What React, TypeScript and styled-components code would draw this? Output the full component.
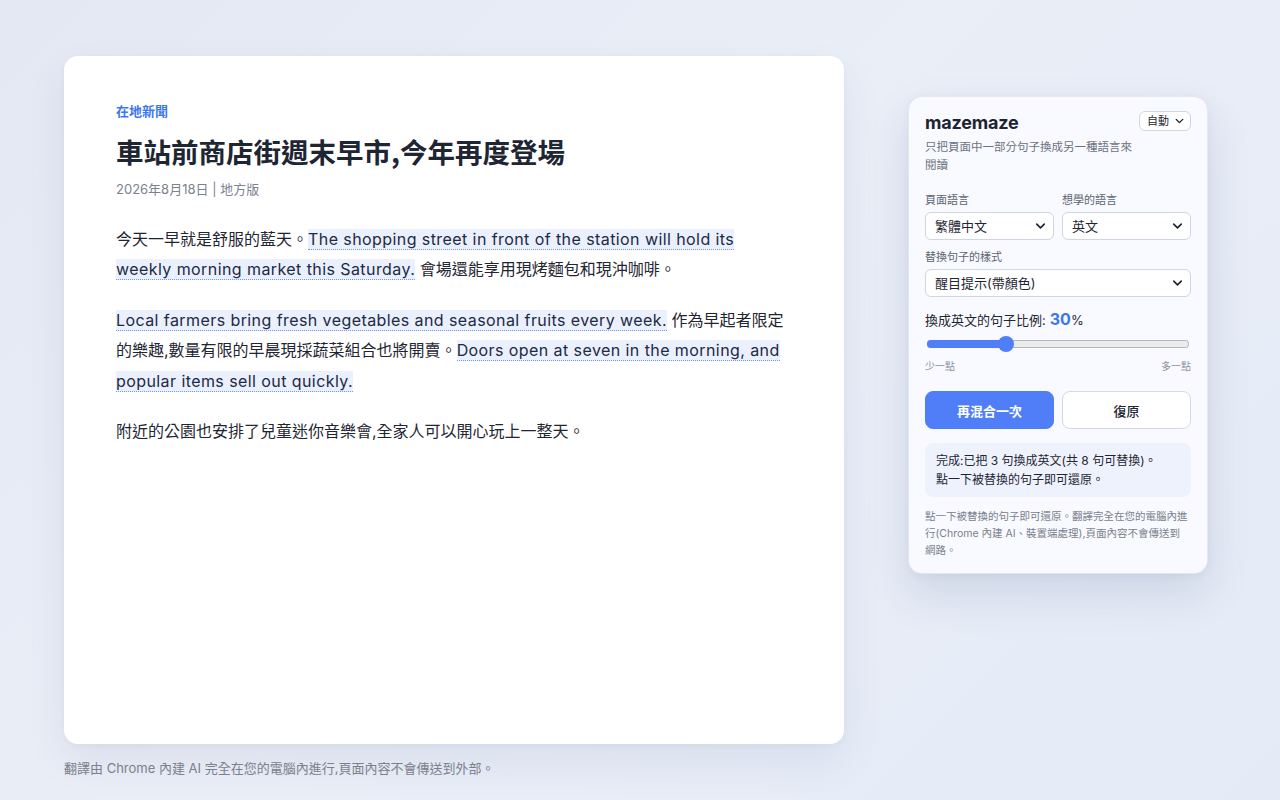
import React from 'react';
import styled, { createGlobalStyle } from 'styled-components';
import { ChevronDown } from 'lucide-react';

const GlobalStyle = createGlobalStyle`
  html, body {
    margin: 0;
    padding: 0;
  }
  body {
    min-height: 800px;
    background: linear-gradient(135deg, #e3e8f3 0%, #eaeef7 45%, #e4ebf7 100%);
    font-family: Inter, "Noto Sans CJK TC", sans-serif;
    color: #1f2633;
  }
`;

const Page = styled.div`
  display: flex;
  align-items: flex-start;
  gap: 64px;
  padding: 56px 0 0 64px;
`;

const Column = styled.div`
  display: flex;
  flex-direction: column;
  width: 780px;
`;

const ArticleCard = styled.article`
  box-sizing: border-box;
  width: 780px;
  min-height: 688px;
  background: #ffffff;
  border-radius: 14px;
  padding: 45px 52px 40px;
  box-shadow: 0 18px 40px rgba(40, 60, 110, 0.08), 0 2px 6px rgba(40, 60, 110, 0.04);
`;

const Category = styled.div`
  font-family: "Noto Sans CJK TC", sans-serif;
  font-size: 13px;
  line-height: 20px;
  font-weight: 700;
  color: #3b78f0;
`;

const Title = styled.h1`
  margin: 12px 0 0;
  font-family: "Noto Sans CJK TC", sans-serif;
  font-size: 27.5px;
  line-height: 36px;
  font-weight: 700;
  color: #1e2533;
`;

const Meta = styled.div`
  margin-top: 10px;
  font-size: 13px;
  line-height: 20px;
  color: #7b8290;
`;

const Body = styled.div`
  margin-top: 25px;
  max-width: 670px;
`;

const Para = styled.p`
  margin: 0 0 20px;
  font-size: 16px;
  line-height: 1.9;
  color: #1f2633;
`;

/* sentences swapped into the target language */
const Swapped = styled.span`
  background: #eaf0fd;
  border-bottom: 1px dotted #6f98ee;
  color: #1c2a44;
  letter-spacing: 0.42px;
`;

const Footnote = styled.div`
  margin-top: 14px;
  font-size: 13px;
  line-height: 20px;
  color: #7a808c;
`;

const Panel = styled.aside`
  box-sizing: border-box;
  width: 300px;
  margin-top: 40px;
  padding: 14px 16px 14px;
  background: #f8faff;
  border-radius: 14px;
  border: 1px solid rgba(210, 218, 235, 0.6);
  box-shadow: 0 20px 44px rgba(40, 60, 110, 0.13), 0 2px 8px rgba(40, 60, 110, 0.05);
`;

const Header = styled.div`
  display: flex;
  justify-content: space-between;
  align-items: flex-start;
`;

const Brand = styled.div`
  font-size: 18px;
  line-height: 24px;
  font-weight: 700;
  color: #1d2330;
  letter-spacing: -0.2px;
`;

const Subtitle = styled.div`
  margin-top: 3px;
  font-size: 11.5px;
  line-height: 18px;
  color: #6c7280;
`;

const SelectWrap = styled.div<{ $fixed?: number }>`
  position: relative;
  display: flex;
  flex: ${({ $fixed }) => ($fixed ? `0 0 ${$fixed}px` : '1')};
`;

const Select = styled.select<{ $small?: boolean }>`
  appearance: none;
  box-sizing: border-box;
  width: 100%;
  height: ${({ $small }) => ($small ? '20px' : '28px')};
  padding: ${({ $small }) => ($small ? '0 20px 0 7px' : '0 24px 0 9px')};
  border: 1px solid #cfd5e1;
  border-radius: 6px;
  background: #ffffff;
  font-family: Inter, "Noto Sans CJK TC", sans-serif;
  font-size: ${({ $small }) => ($small ? '11px' : '13px')};
  color: #1f2633;
  outline: none;
`;

const Caret = styled(ChevronDown)<{ $small?: boolean }>`
  position: absolute;
  right: ${({ $small }) => ($small ? '5px' : '6px')};
  top: 50%;
  transform: translateY(-50%);
  pointer-events: none;
  color: #1f2633;
`;

const Row = styled.div`
  display: flex;
  gap: 8px;
`;

const Field = styled.div<{ $top: number }>`
  flex: 1;
  margin-top: ${({ $top }) => $top}px;
  display: flex;
  flex-direction: column;
`;

const Label = styled.div`
  font-size: 11px;
  line-height: 14px;
  color: #5d6472;
  margin-bottom: 5px;
`;

const RatioLabel = styled.div`
  margin-top: 12px;
  font-size: 13px;
  line-height: 20px;
  color: #1f2633;
`;

const RatioValue = styled.b`
  font-size: 16px;
  font-weight: 700;
  color: #3f74f0;
  margin-left: 4px;
`;

const Track = styled.div`
  position: relative;
  margin: 10px 2px 0;
  height: 8px;
  border-radius: 4px;
  background: #ececef;
  box-shadow: inset 0 0 0 1px #b6b8be;
`;

const Fill = styled.div`
  height: 100%;
  border-radius: 4px;
  background: #4f7ef8;
`;

const Thumb = styled.div`
  position: absolute;
  top: 50%;
  width: 16px;
  height: 16px;
  border-radius: 50%;
  background: #4f7ef8;
  transform: translate(-50%, -50%);
`;

const Scale = styled.div`
  display: flex;
  justify-content: space-between;
  margin-top: 11px;
  font-size: 10px;
  line-height: 14px;
  color: #8a909c;
`;

const Buttons = styled.div`
  display: flex;
  gap: 8px;
  margin-top: 18px;
`;

const Button = styled.button<{ $primary?: boolean }>`
  flex: 1;
  height: 38px;
  border-radius: 8px;
  font-family: "Noto Sans CJK TC", sans-serif;
  font-size: 13px;
  font-weight: ${({ $primary }) => ($primary ? 700 : 500)};
  color: ${({ $primary }) => ($primary ? '#ffffff' : '#1f2633')};
  background: ${({ $primary }) => ($primary ? '#4f7ef8' : '#ffffff')};
  border: 1px solid ${({ $primary }) => ($primary ? '#4f7ef8' : '#d3d8e3')};
  cursor: pointer;
`;

const Status = styled.div`
  margin-top: 14px;
  padding: 8px 11px;
  border-radius: 8px;
  background: #eef2fd;
  font-size: 12px;
  line-height: 19px;
  color: #1f2633;
`;

const Note = styled.div`
  margin: 11px 2px 0 0;
  font-size: 10.5px;
  line-height: 17px;
  color: #7a808c;
`;

const ratio = 30;

export default function App() {
  return (
    <>
      <GlobalStyle />
      <Page>
        <Column>
          <ArticleCard>
            <Category>在地新聞</Category>
            <Title>車站前商店街週末早市,今年再度登場</Title>
            <Meta>2026年8月18日 | 地方版</Meta>
            <Body>
              <Para>
                今天一早就是舒服的藍天。
                <Swapped>The shopping street in front of the station will hold its weekly morning market this Saturday.</Swapped>{' '}
                會場還能享用現烤麵包和現沖咖啡。
              </Para>
              <Para>
                <Swapped>Local farmers bring fresh vegetables and seasonal fruits every week.</Swapped>{' '}
                作為早起者限定的樂趣,數量有限的早晨現採蔬菜組合也將開賣。
                <Swapped>Doors open at seven in the morning, and popular items sell out quickly.</Swapped>
              </Para>
              <Para>附近的公園也安排了兒童迷你音樂會,全家人可以開心玩上一整天。</Para>
            </Body>
          </ArticleCard>
          <Footnote>翻譯由 Chrome 內建 AI 完全在您的電腦內進行,頁面內容不會傳送到外部。</Footnote>
        </Column>

        <Panel>
          <Header>
            <div>
              <Brand>mazemaze</Brand>
              <Subtitle>只把頁面中一部分句子換成另一種語言來閱讀</Subtitle>
            </div>
            <SelectWrap $fixed={52}>
              <Select $small defaultValue="auto">
                <option value="auto">自動</option>
              </Select>
              <Caret $small size={13} strokeWidth={2.6} />
            </SelectWrap>
          </Header>

          <Row>
            <Field $top={19}>
              <Label>頁面語言</Label>
              <SelectWrap>
                <Select defaultValue="zh-TW">
                  <option value="zh-TW">繁體中文</option>
                </Select>
                <Caret size={15} strokeWidth={2.6} />
              </SelectWrap>
            </Field>
            <Field $top={19}>
              <Label>想學的語言</Label>
              <SelectWrap>
                <Select defaultValue="en">
                  <option value="en">英文</option>
                </Select>
                <Caret size={15} strokeWidth={2.6} />
              </SelectWrap>
            </Field>
          </Row>

          <Field $top={10}>
            <Label>替換句子的樣式</Label>
            <SelectWrap>
              <Select defaultValue="hint">
                <option value="hint">醒目提示(帶顏色)</option>
              </Select>
              <Caret size={15} strokeWidth={2.6} />
            </SelectWrap>
          </Field>

          <RatioLabel>
            換成英文的句子比例:<RatioValue>{ratio}</RatioValue>%
          </RatioLabel>
          <Track>
            <Fill style={{ width: `${ratio}%` }} />
            <Thumb style={{ left: `${ratio}%` }} />
          </Track>
          <Scale>
            <span>少一點</span>
            <span>多一點</span>
          </Scale>

          <Buttons>
            <Button $primary>再混合一次</Button>
            <Button>復原</Button>
          </Buttons>

          <Status>
            完成:已把 3 句換成英文(共 8 句可替換)。
            <br />
            點一下被替換的句子即可還原。
          </Status>

          <Note>
            點一下被替換的句子即可還原。翻譯完全在您的電腦內進行(Chrome 內建 AI、裝置端處理),頁面內容不會傳送到網路。
          </Note>
        </Panel>
      </Page>
    </>
  );
}
